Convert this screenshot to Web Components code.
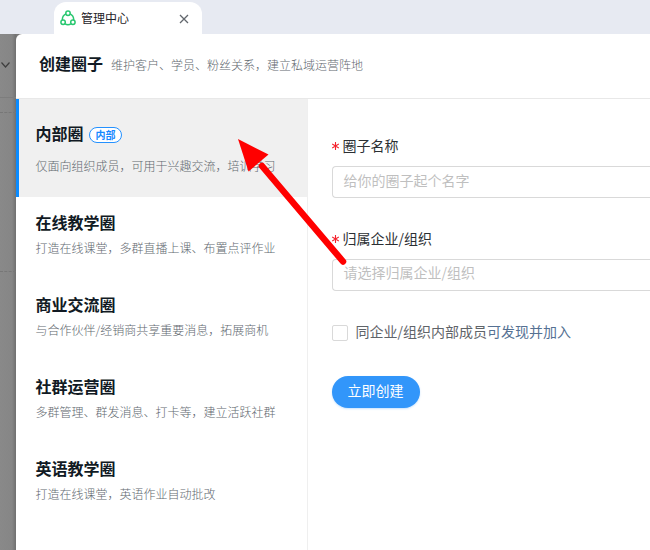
<!DOCTYPE html>
<html lang="zh-CN">
<head>
<meta charset="utf-8">
<title>管理中心</title>
<style>
html,body{margin:0;height:100%;overflow:hidden}
body{font-family:"Noto Sans CJK SC",sans-serif;background:#868686}
</style>
</head>
<body>
<app-window></app-window>
<script>
const define = (name, html) => customElements.define(name, class extends HTMLElement {
  constructor() {
    super();
    const t = document.createElement('template');
    t.innerHTML = html;
    this.attachShadow({mode: 'open'}).append(t.content.cloneNode(true));
  }
});

define('browser-tab', `
<style>
:host{display:flex;box-sizing:border-box;width:148px;height:32px;align-items:center;background:#fff;border-radius:12px 12px 0 0;padding:0 13px 0 6px;font-size:12px;line-height:18px;color:#1f2329}
.logo{width:16px;height:16px;margin-right:5.500px}
span{flex:1;margin-top:-1px}
.close{width:10px;height:10px;margin-top:2px}
svg{fill:none;display:block}
</style>
<svg class="logo" viewBox="0 0 16 16" stroke="#28c76f" stroke-width="1.5"><circle cx="8" cy="3.2" r="2.2"/><circle cx="3.1" cy="12.3" r="2.2"/><circle cx="12.9" cy="12.3" r="2.2"/><path d="M5.8 3.8C3.5 5 2.2 7.3 2.4 10M10.2 3.8C12.5 5 13.8 7.3 13.6 10M5 13.9C7 15.1 9 15.1 11 13.9"/></svg>
<span><slot></slot></span>
<svg class="close" viewBox="0 0 10 10" stroke="#62676d" stroke-width="1.3"><path d="M1 1l8 8M9 1L1 9"/></svg>`);

define('page-shade', `
<style>
:host{display:flex;flex-direction:column;width:15.500px;flex:none;background:linear-gradient(90deg,#898989,#868686 75%,#707070)}
.top{height:64px;flex:none;border-bottom:1px solid #7d7d7d;display:flex;align-items:center;box-sizing:border-box}
.mid{margin-top:14px;border:dashed #777;border-width:1px 0;box-sizing:border-box;height:160px}
svg{display:block;fill:none;margin-top:-2px}
</style>
<div class="top"><svg width="11" height="8" viewBox="0 0 11 8" stroke="#3e3e3e" stroke-width="1.2"><path d="M1.5 1.5L5.5 6L9.5 1.5"/></svg></div><div class="mid"></div>`);

define('circle-option', `
<style>
:host{display:block;box-sizing:border-box;height:82px;padding:13px 0 0 20px}
:host([selected]){height:98px;padding:22px 0 0 17px;border-left:3px solid #0a8bff;background:#f0f0f0}
.title{display:flex;align-items:center;height:24px;font-size:16px;line-height:24px;font-weight:600;color:#111a24}
.desc{margin-top:4px;font-size:12px;line-height:20px;height:20px;color:#62696f;font-weight:300;white-space:nowrap}
:host([selected]) .desc{margin-top:11px}
</style>
<div class="title"><slot name="title"></slot><slot name="badge"></slot></div>
<div class="desc"><slot></slot></div>`);

define('pill-badge', `
<style>
:host{display:block;box-sizing:border-box;width:33px;height:16px;margin:4px 0 0 5.500px;border:1px solid #2491ff;border-radius:8px;background:#fff;color:#1688ff;font-size:10px;line-height:13px;font-weight:600;text-align:center}
</style><slot></slot>`);

define('form-field', `
<style>
:host{display:block;height:93px}
.label{display:flex;height:22px;align-items:center;gap:4px;font-size:14px;line-height:22px;color:#2b2f33}
.star{width:7px;height:8px;stroke:#f5222d;stroke-width:1.1;display:block;margin-top:2px}
.box{box-sizing:border-box;height:32px;margin-top:10px;border:1px solid #d9d9d9;border-right:0;border-radius:4px 0 0 4px;padding-left:11px;font-size:14px;line-height:var(--line,27px);color:#bfbfbf}
</style>
<div class="label"><svg class="star" viewBox="0 0 7 8"><path d="M3.5 0v8M.2 2l6.600 4M6.800 2L.2 6"/></svg><slot name="label"></slot></div>
<div class="box"><slot></slot></div>`);

define('check-row', `
<style>
:host{display:flex;align-items:center;height:22px;gap:8px;font-size:14px;line-height:22px;color:#5f6469}
i{box-sizing:border-box;width:16px;height:16px;border:1px solid #d9d9d9;border-radius:2px;margin-top:3px}
</style><i></i><span><slot></slot></span>`);

define('pill-button', `
<style>
:host{display:block;width:88px;height:32px;border-radius:16px;background:#3296fa;color:#fff;font-size:14px;line-height:28px;text-align:center;box-shadow:0 1px 2px #3296fa44}
</style><slot></slot>`);

define('pointer-arrow', `
<style>:host{position:absolute;left:230px;top:130px;width:130px;height:145px;pointer-events:none}svg{display:block}</style>
<svg width="130" height="145"><path d="M32 36L113 131.500" stroke="#f00" stroke-width="6.500" stroke-linecap="round"/><path d="M8 9L38.500 24.500L18.500 41.500Z" fill="#f00"/></svg>`);

define('app-window', `
<style>
:host{display:flex;flex-direction:column;width:650px;height:550px;position:relative;overflow:hidden}
.tabs{height:34px;flex:none;box-sizing:border-box;background:#e7eaf2;padding:2px 0 0 53.500px}
.main{flex:1;display:flex;min-height:0;background:#777}
.modal{flex:1;display:flex;flex-direction:column;background:#fff;border-radius:6px 0 0 0;overflow:hidden}
header{height:65px;box-sizing:border-box;border-bottom:1px solid #e8e8e8;display:flex;align-items:center;padding:0 0 7px 23.500px;gap:8px}
h1{margin:0;font-size:16px;line-height:24px;font-weight:600;color:#111a24}
header span{font-size:12px;line-height:20px;font-weight:300;color:#62686f;padding-top:5px}
.body{flex:1;display:flex}
nav{width:291px;border-right:1px solid #efefef;flex:none}
form{flex:1;padding:35px 0 0 24px}
check-row{margin-top:0}
pill-button{margin-top:34px}
b{font-weight:400;color:#557193}
</style>
<div class="tabs"><browser-tab>管理中心</browser-tab></div>
<div class="main">
<page-shade></page-shade>
<div class="modal">
<header><h1>创建圈子</h1><span>维护客户、学员、粉丝关系，建立私域运营阵地</span></header>
<div class="body">
<nav>
<circle-option selected><span slot="title">内部圈</span><pill-badge slot="badge">内部</pill-badge>仅面向组织成员，可用于兴趣交流，培训学习</circle-option>
<circle-option><span slot="title">在线教学圈</span>打造在线课堂，多群直播上课、布置点评作业</circle-option>
<circle-option><span slot="title">商业交流圈</span>与合作伙伴/经销商共享重要消息，拓展商机</circle-option>
<circle-option><span slot="title">社群运营圈</span>多群管理、群发消息、打卡等，建立活跃社群</circle-option>
<circle-option><span slot="title">英语教学圈</span>打造在线课堂，英语作业自动批改</circle-option>
</nav>
<form>
<form-field><span slot="label">圈子名称</span>给你的圈子起个名字</form-field>
<form-field style="--line:25px"><span slot="label">归属企业/组织</span>请选择归属企业/组织</form-field>
<check-row>同企业/组织内部成员<b>可发现并加入</b></check-row>
<pill-button>立即创建</pill-button>
</form>
</div></div></div>
<pointer-arrow></pointer-arrow>`);
</script>
</body>
</html>
